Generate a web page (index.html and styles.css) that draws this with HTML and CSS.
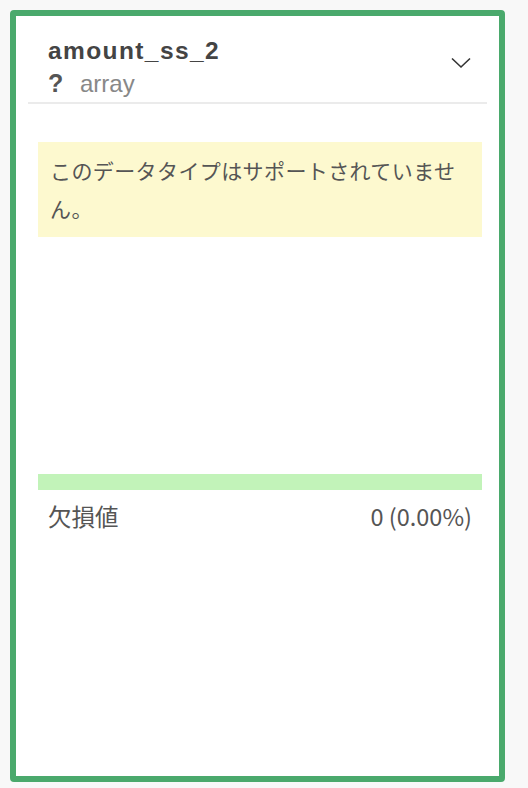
FILE: index.html
```html
<!DOCTYPE html>
<html lang="ja">
<head>
<meta charset="utf-8">
<link rel="stylesheet" href="styles.css">
</head>
<body>
<div class="card">
  <div class="header">
    <div class="titles">
      <div class="title">amount_ss_2</div>
      <div class="type"><span class="qmark">?</span><span class="type-name">array</span></div>
    </div>
    <svg class="chevron" width="20" height="12" viewBox="0 0 20 12"><path d="M1 1.5 L10 10 L19 1.5" fill="none" stroke="#333" stroke-width="1.6"/></svg>
  </div>
  <div class="body">
    <div class="chart-area">
      <div class="notice">このデータタイプはサポートされていません。</div>
    </div>
    <div class="missing-bar"></div>
    <div class="missing-row">
      <span>欠損値</span>
      <span>0 (0.00%)</span>
    </div>
  </div>
</div>
</body>
</html>
```
FILE: styles.css
```css
html, body {
  margin: 0;
  padding: 0;
  background: #f8f8f8;
}
body {
  padding: 10px;
  font-family: "Liberation Sans", "Noto Sans CJK JP", sans-serif;
  color: #555;
}
.card {
  box-sizing: border-box;
  width: 495px;
  height: 772px;
  border: 6px solid #4aa96c;
  border-radius: 4px;
  background: #fff;
}
.header {
  margin: 0 12px;
  padding: 20px 16px 1px 20px;
  border-bottom: 2px solid #ebebeb;
  display: flex;
  justify-content: space-between;
  align-items: flex-start;
}
.title {
  font-size: 24.5px;
  font-weight: bold;
  letter-spacing: 1.4px;
  line-height: 30px;
  color: #444;
}
.type {
  display: flex;
  align-items: baseline;
  font-size: 24px;
  line-height: 35px;
  color: #888;
}
.qmark {
  font-weight: bold;
  font-size: 25px;
  color: #555;
  width: 32px;
}
.chevron {
  margin-top: 21px;
}
.body {
  padding: 38px 17px 0 22px;
}
.chart-area {
  height: 332px;
}
.notice {
  background: #fdf9cf;
  padding: 9px 12px 10px 12px;
  font-family: "Noto Sans CJK JP", sans-serif;
  font-size: 21px;
  letter-spacing: 0.4px;
  line-height: 38px;
  color: #555;
}
.missing-bar {
  height: 16px;
  background: #c2f3b9;
}
.missing-row {
  display: flex;
  justify-content: space-between;
  padding: 9px 10px 0 10px;
  font-family: "Noto Sans CJK JP", sans-serif;
  font-size: 23.5px;
  line-height: 34px;
  color: #555;
}
```
